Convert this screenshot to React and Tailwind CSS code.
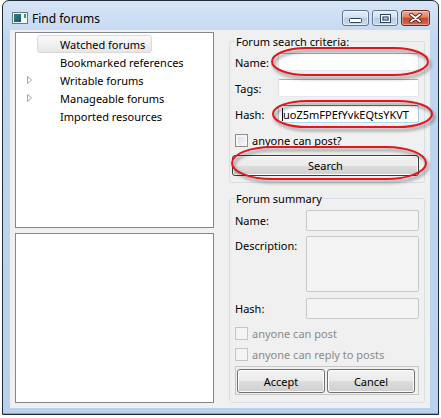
import { useState } from "react";

const treeItems = [
  { label: "Watched forums", selected: true },
  { label: "Bookmarked references" },
  { label: "Writable forums", expandable: true },
  { label: "Manageable forums", expandable: true },
  { label: "Imported resources" },
];

function AppIcon() {
  return (
    <svg width="16" height="12" viewBox="0 0 16 12">
      <defs>
        <linearGradient id="ico" x1="0" y1="0" x2="1" y2="1">
          <stop offset="0" stopColor="#2e8a6a" />
          <stop offset="1" stopColor="#1d4f7a" />
        </linearGradient>
      </defs>
      <rect x="0.5" y="0.5" width="15" height="11" fill="#f4f6f8" stroke="#6b7684" />
      <rect x="2" y="2" width="7" height="8" fill="url(#ico)" />
      <rect x="12" y="2" width="2" height="4" fill="#3aa04a" />
    </svg>
  );
}

function CaptionButtons() {
  return (
    <div className="flex items-center gap-[3px]">
      <div className="flex h-[16px] w-[27px] items-center justify-center rounded-[3px] border border-[#5f7593] bg-[linear-gradient(#e6eef8,#d2e0f0_45%,#b8cce5_50%,#c9daee)] shadow-[inset_0_0_0_1px_rgba(255,255,255,0.55)]">
        <svg width="13" height="6" viewBox="0 0 13 6" className="mt-[5px]">
          <rect x="0.5" y="0.5" width="12" height="4" rx="1" fill="#fff" stroke="#2f425c" />
        </svg>
      </div>
      <div className="flex h-[16px] w-[26px] items-center justify-center rounded-[3px] border border-[#5f7593] bg-[linear-gradient(#e6eef8,#d2e0f0_45%,#b8cce5_50%,#c9daee)] shadow-[inset_0_0_0_1px_rgba(255,255,255,0.55)]">
        <svg width="11" height="9" viewBox="0 0 11 9">
          <rect x="0.5" y="0.5" width="10" height="8" fill="none" stroke="#2f425c" />
          <rect x="1.5" y="1.5" width="8" height="6" fill="none" stroke="#fff" strokeWidth="1" />
          <rect x="3" y="3" width="5" height="3" fill="none" stroke="#2f425c" />
        </svg>
      </div>
      <div className="flex h-[16px] w-[29px] items-center justify-center rounded-[3px] border border-[#6b2a20] bg-[linear-gradient(#eab0a2,#dc7d68_45%,#c8452e_50%,#d36a50)] shadow-[inset_0_0_0_1px_rgba(255,255,255,0.35)]">
        <svg width="13" height="10" viewBox="0 0 13 10">
          <path d="M2 1.5 L11 8.5 M11 1.5 L2 8.5" stroke="#4a1c14" strokeWidth="3.6" strokeLinecap="round" />
          <path d="M2 1.5 L11 8.5 M11 1.5 L2 8.5" stroke="#fff" strokeWidth="2" strokeLinecap="round" />
        </svg>
      </div>
    </div>
  );
}

function Expander() {
  return (
    <svg width="5" height="8" viewBox="0 0 5 8">
      <path d="M0.5 0.5 L4.5 4 L0.5 7.5 Z" fill="#fff" stroke="#a6a6a6" />
    </svg>
  );
}

function Input({ w = "w-[141px]", h = "h-[18px]", focused, disabled, children }) {
  let tone = "border-[#abadb3] border-l-[#dbdfe6] border-r-[#dbdfe6] border-b-[#e3e9ef] bg-white";
  if (focused) tone = "border-[#3d7bad] border-l-[#a4c9e3] border-r-[#a4c9e3] border-b-[#b7d9ed] bg-white";
  if (disabled) tone = "border-[#c5c9cc] bg-[#f4f4f4]";
  return (
    <div className={`${w} ${h} ${tone} flex shrink-0 items-center overflow-hidden whitespace-nowrap rounded-[2px] border`}>
      {children}
    </div>
  );
}

function Check({ label, disabled }) {
  return (
    <label className="flex h-[16px] items-center gap-[4px]">
      <span
        className={
          disabled
            ? "h-[13px] w-[13px] shrink-0 border border-[#c4c4c4] bg-[#f4f4f4]"
            : "h-[13px] w-[13px] shrink-0 border border-[#8e8f8f] bg-[linear-gradient(135deg,#d4d8de,#fdfdfd)] shadow-[inset_0_0_0_2px_#f6f6f6]"
        }
      />
      <span className={disabled ? "text-[#8a8a8a]" : "text-black"}>{label}</span>
    </label>
  );
}

function Button({ className, children }) {
  return (
    <button
      className={`flex items-center justify-center rounded-[3px] border bg-[linear-gradient(#f2f2f2,#ebebeb_50%,#dddddd_50%,#cfcfcf)] text-black shadow-[inset_0_0_0_1px_#fcfcfc] ${className}`}
    >
      {children}
    </button>
  );
}

// hand-drawn red rings over the search fields
function Annotations() {
  const rings = [
    { x: 272, y: 48, w: 156, h: 27, rx: 34 },
    { x: 273, y: 101, w: 159, h: 26, rx: 34 },
    { x: 232, y: 147, w: 194, h: 32, rx: 40 },
  ];
  return (
    <svg className="pointer-events-none absolute left-0 top-0" width="441" height="418" viewBox="0 0 441 418">
      <defs>
        <filter id="soft" x="-10%" y="-50%" width="120%" height="200%">
          <feGaussianBlur stdDeviation="1.6" />
        </filter>
      </defs>
      {rings.map((r, i) => (
        <g key={i}>
          <rect x={r.x + 2} y={r.y + 3} width={r.w} height={r.h} rx={r.rx} ry={r.h / 2} fill="none" stroke="#000" strokeOpacity="0.3" strokeWidth="3" filter="url(#soft)" />
          <rect x={r.x} y={r.y} width={r.w} height={r.h} rx={r.rx} ry={r.h / 2} fill="none" stroke="#e2161e" strokeWidth="2" />
        </g>
      ))}
    </svg>
  );
}

export default function App() {
  const [selected, setSelected] = useState(0);

  return (
    <div className="relative h-[418px] w-[441px] overflow-hidden bg-white font-['Noto_Sans','Liberation_Sans',sans-serif] text-[11px] leading-[15px] text-black">
      <div className="ml-[2px] flex h-[415px] w-[437px] flex-col rounded-t-[7px] border border-[#1f2b38] bg-[linear-gradient(#d6e5f6,#c0d6ef_40px,#b9d1ea)]">
        {/* title bar */}
        <div className="flex h-[29px] items-center pl-[9px] pr-[8px] pt-[5px]">
          <AppIcon />
          <span className="ml-[4px] text-[12px]">Find forums</span>
          <div className="flex-1" />
          <CaptionButtons />
        </div>

        {/* client area */}
        <div className="ml-[7px] flex h-[378px] w-[420px] bg-[#f0f0f0]">
          <div className="flex flex-col gap-[5px] pl-[5px] pt-[2px]">
            <div className="h-[196px] w-[199px] border border-[#828790] bg-white pt-[2px]">
              {treeItems.map((item, i) => (
                <div key={item.label} className="flex h-[18px] items-center" onClick={() => setSelected(i)}>
                  <span className="flex w-[21px] pl-[11px]">{item.expandable && <Expander />}</span>
                  {selected === i ? (
                    <span className="flex h-[18px] w-[115px] items-center rounded-[3px] border border-[#d9d9d9] bg-[linear-gradient(#fafafa,#e6e6e6)] pl-[22px]">
                      {item.label}
                    </span>
                  ) : (
                    <span className="pl-[23px]">{item.label}</span>
                  )}
                </div>
              ))}
            </div>
            <div className="h-[170px] w-[199px] border border-[#828790] bg-white" />
          </div>

          <div className="ml-[15px] flex w-[196px] flex-col gap-[8px] pt-[4px]">
            <fieldset className="rounded-[3px] border border-[#d5dfe5] px-[5px] pb-[6px] pt-[4px]">
              <legend className="px-[1px]">Forum search criteria:</legend>
              <div className="flex flex-col">
                <div className="flex h-[18px] items-center">
                  <span className="w-[43px]">Name:</span>
                  <Input />
                </div>
                <div className="mt-[8px] flex h-[18px] items-center">
                  <span className="w-[43px]">Tags:</span>
                  <Input />
                </div>
                <div className="mt-[8px] flex h-[18px] items-center">
                  <span className="w-[43px]">Hash:</span>
                  <Input focused>
                    <span className="ml-[3px] h-[13px] w-[1px] shrink-0 bg-black" />
                    <span>uoZ5mFPEfYvkEQtsYKVT</span>
                  </Input>
                </div>
                <div className="mt-[9px]">
                  <Check label="anyone can post?" />
                </div>
                <Button className="-ml-[3px] mt-[7px] h-[21px] w-[187px] border-[#3c3c3c]">Search</Button>
              </div>
            </fieldset>

            <fieldset className="rounded-[3px] border border-[#d5dfe5] px-[5px] pb-[7px] pt-[4px]">
              <legend className="px-[1px]">Forum summary</legend>
              <div className="flex flex-col">
                <div className="flex h-[21px] items-center">
                  <span className="w-[71px]">Name:</span>
                  <Input w="w-[113px]" h="h-[21px]" disabled />
                </div>
                <div className="mt-[5px] flex">
                  <span className="w-[71px] pt-[2px]">Description:</span>
                  <Input w="w-[113px]" h="h-[56px]" disabled />
                </div>
                <div className="mt-[6px] flex h-[21px] items-center">
                  <span className="w-[71px]">Hash:</span>
                  <Input w="w-[113px]" h="h-[21px]" disabled />
                </div>
                <div className="mt-[6px]">
                  <Check label="anyone can post" disabled />
                </div>
                <div className="mt-[5px]">
                  <Check label="anyone can reply to posts" disabled />
                </div>
                <div className="mt-[4px] flex h-[29px] gap-[2px] border border-[#c7c7c7] pb-[1px] pl-[1px] pr-[3px] pt-[2px]">
                  <Button className="h-[24px] w-[88px] border-[#707070]">Accept</Button>
                  <Button className="h-[24px] w-[88px] border-[#707070]">Cancel</Button>
                </div>
              </div>
            </fieldset>
          </div>
        </div>

        <div className="h-[5px]" />
        <div className="h-[1px] bg-[#3ac4ee]" />
      </div>

      <Annotations />
    </div>
  );
}
